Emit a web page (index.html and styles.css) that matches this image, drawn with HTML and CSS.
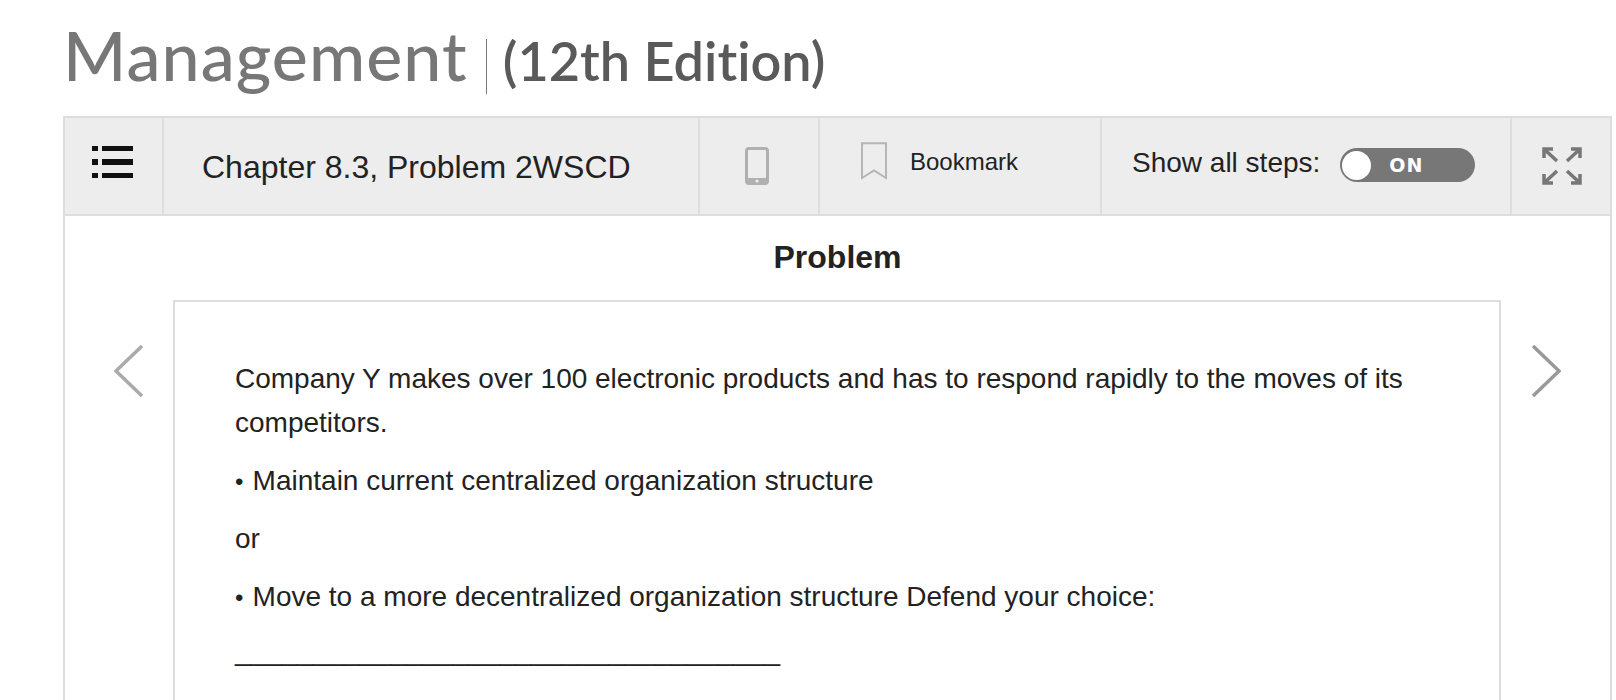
FILE: index.html
```html
<!DOCTYPE html>
<html>
  <head>
    <title>Management (12th Edition)</title>
    <link rel="stylesheet" href="styles.css">
  </head>
  <body>
    <h1 class="book-title">
      <span class="book-name">Management</span>
      <span class="book-edition">(12th Edition)</span>
    </h1>

    <div class="frame">
      <div class="toolbar">
        <div class="cell cell-menu">
          <svg class="icon-list" width="41" height="32" viewBox="0 0 41 32">
            <rect x="0" y="0" width="6" height="5" />
            <rect x="10" y="0" width="31" height="5" />
            <rect x="0" y="13" width="6" height="6" />
            <rect x="10" y="13" width="31" height="6" />
            <rect x="0" y="27" width="6" height="5" />
            <rect x="10" y="27" width="31" height="5" />
          </svg>
        </div>
        <div class="cell cell-chapter">Chapter 8.3, Problem 2WSCD</div>
        <div class="cell cell-phone">
          <svg width="24" height="38" viewBox="0 0 24 38">
            <rect x="1.5" y="1.5" width="21" height="35" rx="2.5" fill="none" stroke="#b0b0b0" stroke-width="3" />
            <rect x="1" y="31" width="22" height="6" rx="2" fill="#b0b0b0" />
            <circle cx="12" cy="34" r="1.6" fill="#eee" />
          </svg>
        </div>
        <div class="cell cell-bookmark">
          <svg width="26" height="38" viewBox="0 0 26 38">
            <path d="M1 36V1.2H25V36L13 28.5Z" fill="none" stroke="#b5b5b5" stroke-width="2" />
          </svg>
          <span>Bookmark</span>
        </div>
        <div class="cell cell-steps">
          <span>Show all steps:</span>
          <div class="toggle">
            <span class="knob"></span>
            <span class="toggle-label">ON</span>
          </div>
        </div>
        <div class="cell cell-expand">
          <svg width="42" height="40" viewBox="0 0 42 40" fill="none" stroke="#777" stroke-width="3.5">
            <path d="M3 12V3H12M3 3L16 15" />
            <path d="M39 12V3H30M39 3L26 15" />
            <path d="M3 28V37H12M3 37L16 25" />
            <path d="M39 28V37H30M39 37L26 25" />
          </svg>
        </div>
      </div>

      <h2 class="section-title">Problem</h2>

      <div class="problem-row">
        <div class="nav-col nav-prev">
          <svg width="30" height="52" viewBox="0 0 30 52" fill="none" stroke="#aaa" stroke-width="3.5">
            <path d="M28 1L2 26L28 51" />
          </svg>
        </div>
        <div class="problem-box">
          <p>Company Y makes over 100 electronic products and has to respond rapidly to the moves of its competitors.</p>
          <p><span class="dot">•</span>Maintain current centralized organization structure</p>
          <p>or</p>
          <p><span class="dot">•</span>Move to a more decentralized organization structure Defend your choice:</p>
          <p class="blank-line">___________________________________</p>
        </div>
        <div class="nav-col nav-next">
          <svg width="30" height="52" viewBox="0 0 30 52" fill="none" stroke="#999" stroke-width="3.5">
            <path d="M2 1L28 26L2 51" />
          </svg>
        </div>
      </div>
    </div>
  </body>
</html>
```

FILE: styles.css
```css
html, body {
  height: 700px;
  overflow: hidden;
}

body {
  margin: 0;
  background-color: #fff;
  color: #222;
  font-family: "Liberation Sans", Arial, sans-serif;
}

.book-title {
  display: flex;
  align-items: baseline;
  height: 116px;
  margin: 0;
  padding-left: 63px;
  box-sizing: border-box;
  font-family: Lato, sans-serif;
  font-variant-ligatures: none;
  font-weight: 400;
  line-height: 110px;
}

.book-name {
  color: #777;
  font-size: 68px;
  font-weight: 500;
  letter-spacing: 1.1px;
}

.book-edition {
  margin-left: 18px;
  padding-left: 16px;
  border-left: 1px solid #777;
  height: 55px;
  line-height: 44px;
  color: #5a5a5a;
  font-size: 54px;
  font-weight: 600;
}

.frame {
  width: 1549px;
  margin-left: 63px;
  box-sizing: border-box;
  border: 2px solid #ddd;
  height: 700px;
}

.toolbar {
  display: grid;
  grid-template-columns: 99px 536px 120px 282px 410px 1fr;
  height: 98px;
  box-sizing: border-box;
  border-bottom: 2px solid #ddd;
  background-color: #ededed;
}

.cell {
  display: flex;
  align-items: center;
  box-sizing: border-box;
  border-right: 2px solid #ddd;
}

.cell:last-child {
  border-right: none;
}

.cell-menu {
  padding: 0 0 8px 27px;
}

.icon-list {
  fill: #111;
}

.cell-chapter {
  padding: 2px 0 0 38px;
  font-size: 32px;
}

.cell-phone {
  justify-content: center;
  padding-right: 4px;
}

.cell-bookmark {
  gap: 23px;
  padding: 0 0 8px 41px;
  font-size: 24px;
}

.cell-bookmark svg {
  margin-top: -2px;
}

.cell-steps {
  padding: 0 0 6px 30px;
  font-size: 28px;
}

.toggle {
  display: flex;
  align-items: center;
  width: 135px;
  height: 34px;
  margin: 4px 0 0 20px;
  border-radius: 17px;
  background-color: #777;
}

.knob {
  width: 29px;
  height: 29px;
  margin-left: 2px;
  border-radius: 50%;
  background-color: #fff;
}

.toggle-label {
  margin-left: 18px;
  color: #fff;
  font-family: "DejaVu Sans", sans-serif;
  font-size: 19px;
  font-weight: 700;
  letter-spacing: 1px;
}

.cell-expand {
  padding-left: 29px;
}

.section-title {
  margin: 0;
  height: 84px;
  line-height: 82px;
  text-align: center;
  font-size: 32px;
  font-weight: 700;
}

.problem-row {
  display: flex;
}

.nav-col {
  display: flex;
  width: 108px;
  padding-top: 45px;
  box-sizing: border-box;
}

.nav-prev {
  justify-content: flex-end;
  padding-right: 29px;
}

.nav-next {
  justify-content: flex-start;
  padding-left: 30px;
}

.problem-box {
  width: 1328px;
  box-sizing: border-box;
  height: 500px;
  padding: 55px 60px;
  border: 2px solid #ddd;
  font-size: 28px;
  line-height: 44px;
}

.problem-box p {
  margin: 0 0 14px;
}

.dot {
  display: inline-block;
  width: 17.6px;
  font-size: 24px;
  line-height: 1;
}

.problem-box .blank-line {
  margin-top: -4px;
}
```
